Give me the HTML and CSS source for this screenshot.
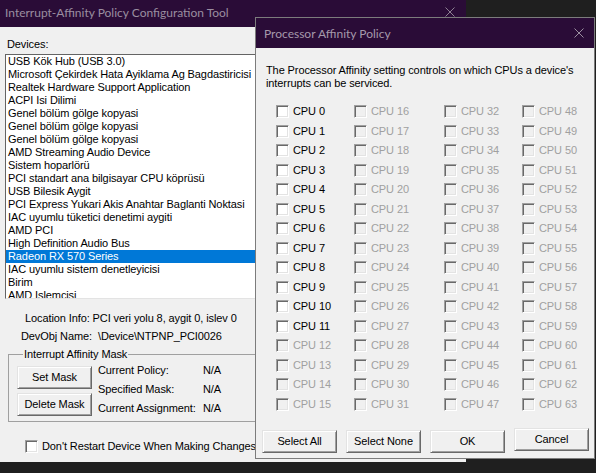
FILE: index.html
```html
<!DOCTYPE html>
<html>
<head>
<meta charset="utf-8">
<link rel="stylesheet" href="styles.css">
</head>
<body class="desktop">
  <div class="win main">
    <div class="titlebar main-title">
      <span class="title-text">Interrupt-Affinity Policy Configuration Tool</span>
      <svg class="close" width="10" height="10" viewBox="0 0 10 10"><path d="M0.5 0.5L9.5 9.5M9.5 0.5L0.5 9.5" stroke="#8d8092" stroke-width="1"/></svg>
    </div>
    <div class="client">
      <div class="devices-label">Devices:</div>
      <ul class="listbox">
        <li>USB Kök Hub (USB 3.0)</li>
        <li>Microsoft Çekirdek Hata Ayiklama Ag Bagdastiricisi</li>
        <li>Realtek Hardware Support Application</li>
        <li>ACPI Isi Dilimi</li>
        <li>Genel bölüm gölge kopyasi</li>
        <li>Genel bölüm gölge kopyasi</li>
        <li>Genel bölüm gölge kopyasi</li>
        <li>AMD Streaming Audio Device</li>
        <li>Sistem hoparlörü</li>
        <li>PCI standart ana bilgisayar CPU köprüsü</li>
        <li>USB Bilesik Aygit</li>
        <li>PCI Express Yukari Akis Anahtar Baglanti Noktasi</li>
        <li>IAC uyumlu tüketici denetimi aygiti</li>
        <li>AMD PCI</li>
        <li>High Definition Audio Bus</li>
        <li class="selected">Radeon RX 570 Series</li>
        <li>IAC uyumlu sistem denetleyicisi</li>
        <li>Birim</li>
        <li>AMD Islemcisi</li>
      </ul>
      <div class="info info-loc">Location Info: PCI veri yolu 8, aygit 0, islev 0</div>
      <div class="info info-dev">DevObj Name:<span class="devname">\Device\NTPNP_PCI0026</span></div>
      <fieldset class="group">
        <legend>Interrupt Affinity Mask</legend>
        <div class="group-body">
          <div class="btn-col">
            <button class="btn">Set Mask</button>
            <button class="btn">Delete Mask</button>
          </div>
          <div class="mask-grid">
            <span>Current Policy:</span><span>N/A</span>
            <span>Specified Mask:</span><span>N/A</span>
            <span>Current Assignment:</span><span>N/A</span>
          </div>
        </div>
      </fieldset>
      <label class="chk restart"><span class="box"></span>Don't Restart Device When Making Changes</label>
    </div>
  </div>

  <div class="win dialog">
    <div class="titlebar dlg-title">
      <span class="title-text">Processor Affinity Policy</span>
      <svg class="close" width="10" height="10" viewBox="0 0 10 10"><path d="M0.5 0.5L9.5 9.5M9.5 0.5L0.5 9.5" stroke="#9b8fa0" stroke-width="1"/></svg>
    </div>
    <div class="dlg-body">
      <p class="desc">The Processor Affinity setting controls on which CPUs a device's<br>interrupts can be serviced.</p>
      <div class="cpu-grid" id="cpuGrid"></div>
      <div class="dlg-buttons">
        <button class="btn">Select All</button>
        <button class="btn">Select None</button>
        <button class="btn">OK</button>
        <button class="btn cancel">Cancel</button>
      </div>
    </div>
  </div>
  <script src="script.js"></script>
</body>
</html>
```

FILE: script.js
```js
(function () {
  var grid = document.getElementById('cpuGrid');
  for (var i = 0; i < 64; i++) {
    var lab = document.createElement('label');
    lab.className = 'chk cpu' + (i < 12 ? '' : ' disabled');
    var box = document.createElement('span');
    box.className = 'box';
    lab.appendChild(box);
    lab.appendChild(document.createTextNode('CPU ' + i));
    grid.appendChild(lab);
  }
})();
```

FILE: styles.css
```css
html, body {
  margin: 0;
  padding: 0;
}

.desktop {
  width: 596px;
  height: 473px;
  overflow: hidden;
  position: relative;
  background: #1f1f1f;
  font: 11px/13px "Liberation Sans", Arial, sans-serif;
  letter-spacing: -0.1px;
  color: #000;
}

.win {
  position: absolute;
  background: #f0f0f0;
  box-sizing: border-box;
  display: flex;
  flex-direction: column;
}

.main {
  left: 0;
  top: 0;
  width: 466px;
  height: 462px;
}

.titlebar {
  background: #2a0c37;
  display: flex;
  align-items: center;
  font-family: "Lato", "Open Sans", sans-serif;
  font-size: 12px;
  letter-spacing: 0;
  flex: none;
}

.main-title {
  height: 27px;
  padding: 0 11px 3px 5px;
  box-sizing: border-box;
  color: #9a8ea0;
}

.dlg-title {
  height: 30px;
  padding: 0 10px 0 8px;
  box-sizing: border-box;
  color: #a599ab;
}

.close {
  margin-left: auto;
  display: block;
}

.client {
  flex: 1;
  padding-top: 11px;
}

.devices-label {
  margin-left: 7px;
  margin-bottom: 3px;
}

.listbox {
  list-style: none;
  margin: 0 0 0 5px;
  padding: 0;
  width: 300px;
  height: 245px;
  box-sizing: border-box;
  background: #fff;
  border: 1px solid;
  border-color: #646464 #e3e3e3 #e3e3e3 #646464;
  overflow: hidden;
}

.listbox li {
  height: 13px;
  line-height: 13px;
  padding-left: 2px;
  white-space: nowrap;
}

.listbox li.selected {
  background: #0078d7;
  color: #fff;
}

.info {
  line-height: 18px;
}

.info-loc {
  margin-top: 10px;
  padding-left: 25px;
}

.info-dev {
  padding-left: 21px;
}

.devname {
  margin-left: 6px;
}

.group {
  margin: 3px 0 0 8px;
  padding: 0 0 5px 8px;
  width: 300px;
  border: 1px solid #a0a0a0;
  box-sizing: border-box;
  min-width: 0;
}

.group legend {
  padding: 0 1px;
  margin-left: 6px;
  line-height: 13px;
}

.group-body {
  display: flex;
  align-items: flex-start;
  height: 55px;
  gap: 6px;
}

.btn-col {
  display: flex;
  flex-direction: column;
  gap: 4px;
  margin-top: 5px;
}

.btn {
  font: inherit;
  letter-spacing: inherit;
  color: #000;
  width: 75px;
  height: 23px;
  padding: 0;
  margin: 0;
  background: #f0f0f0;
  border: 1px solid;
  border-color: #e3e3e3 #696969 #696969 #e3e3e3;
  box-shadow: inset 1px 1px #fff, inset -1px -1px #a0a0a0;
  border-radius: 0;
}

.mask-grid {
  display: grid;
  grid-template-columns: 105px auto;
  grid-auto-rows: 19px;
  align-items: center;
}

.chk {
  display: flex;
  align-items: center;
  white-space: nowrap;
}

.box {
  width: 13px;
  height: 13px;
  box-sizing: border-box;
  flex: none;
  background: #fff;
  border: 1px solid;
  border-color: #a0a0a0 #fff #fff #a0a0a0;
  box-shadow: inset 1px 1px #696969, inset -1px -1px #e3e3e3;
  margin-right: 4px;
}

.restart {
  margin: 18px 0 0 25px;
  height: 13px;
}

.dialog {
  left: 255px;
  top: 17px;
  width: 340px;
  height: 442px;
  border: 1px solid #7c7c7c;
}

.dlg-body {
  flex: 1;
}

.desc {
  margin: 16px 0 0 10px;
  line-height: 13px;
}

.cpu-grid {
  margin: 12px 0 0 20px;
  display: grid;
  grid-template-columns: 78px 90px 78px auto;
  grid-template-rows: repeat(16, 19.5px);
  grid-auto-flow: column;
}

.cpu.disabled {
  color: #a0a0a0;
}

.cpu.disabled .box {
  background: #f0f0f0;
}

.dlg-buttons {
  display: flex;
  align-items: flex-start;
  gap: 9px;
  margin: 14px 0 0 6px;
}

.dlg-buttons .btn {
  margin-top: 2px;
}

.dlg-buttons .cancel {
  margin-top: 0;
}
```
